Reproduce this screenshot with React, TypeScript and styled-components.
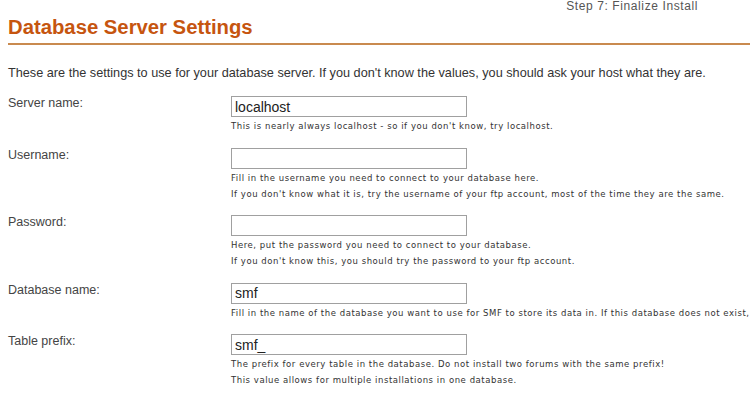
import React from "react";
import styled, { createGlobalStyle } from "styled-components";

const Global = createGlobalStyle`
  html, body { margin: 0; padding: 0; background: #ffffff; }
  body { font-family: "Liberation Sans", Arial, sans-serif; color: #333; }
`;

const Page = styled.div`
  width: 750px;
  height: 400px;
  overflow: hidden;
  padding: 0 0 0 8px;
  box-sizing: border-box;
`;

const StepBar = styled.div`
  display: flex;
  justify-content: flex-end;
  padding-right: 52px;
  font-size: 12px;
  line-height: 12px;
  letter-spacing: 0.6px;
  color: #555;
`;

const Heading = styled.h1`
  margin: 3px 0 0 0;
  font-size: 20.3px;
  line-height: 24px;
  font-weight: bold;
  color: #c6550f;
  padding-bottom: 4px;
  border-bottom: 2px solid #c98a4f;
`;

const Intro = styled.p`
  margin: 20px 0 0 0;
  font-size: 12.7px;
  line-height: 16px;
  color: #333;
  white-space: nowrap;
`;

const Form = styled.div`
  display: grid;
  grid-template-columns: 223px 1fr;
  margin-top: 15px;
`;

const Label = styled.div`
  font-size: 12.5px;
  line-height: 14px;
  color: #444;
`;

const Field = styled.div`
  padding-bottom: 13.5px;
`;

const Input = styled.input`
  display: block;
  box-sizing: border-box;
  width: 236px;
  height: 21px;
  margin: 0;
  padding: 1px 3px;
  border: 1px solid #a0a0a0;
  font-family: "Liberation Sans", Arial, sans-serif;
  font-size: 14px;
  color: #222;
  background: #fff;
  outline: none;
`;

const Help = styled.div`
  margin-top: 1px;
  font-family: "DejaVu Sans", Verdana, sans-serif;
  font-size: 8.5px;
  line-height: 16px;
  letter-spacing: 0.55px;
  color: #333;
  white-space: nowrap;
`;

const rows = [
  {
    label: "Server name:",
    value: "localhost",
    help: ["This is nearly always localhost - so if you don't know, try localhost."],
  },
  {
    label: "Username:",
    value: "",
    help: [
      "Fill in the username you need to connect to your database here.",
      "If you don't know what it is, try the username of your ftp account, most of the time they are the same.",
    ],
  },
  {
    label: "Password:",
    value: "",
    help: [
      "Here, put the password you need to connect to your database.",
      "If you don't know this, you should try the password to your ftp account.",
    ],
  },
  {
    label: "Database name:",
    value: "smf",
    help: [
      "Fill in the name of the database you want to use for SMF to store its data in. If this database does not exist, this installer will try to create it.",
    ],
  },
  {
    label: "Table prefix:",
    value: "smf_",
    help: [
      "The prefix for every table in the database. Do not install two forums with the same prefix!",
      "This value allows for multiple installations in one database.",
    ],
  },
];

export default function App() {
  return (
    <Page>
      <Global />
      <StepBar>Step 7: Finalize Install</StepBar>
      <Heading>Database Server Settings</Heading>
      <Intro>
        These are the settings to use for your database server. If you don't know the values, you should ask your host what they are.
      </Intro>
      <Form>
        {rows.map((r) => (
          <React.Fragment key={r.label}>
            <Label>{r.label}</Label>
            <Field>
              <Input type="text" defaultValue={r.value} readOnly />
              <Help>
                {r.help.map((h) => (
                  <div key={h}>{h}</div>
                ))}
              </Help>
            </Field>
          </React.Fragment>
        ))}
      </Form>
    </Page>
  );
}
